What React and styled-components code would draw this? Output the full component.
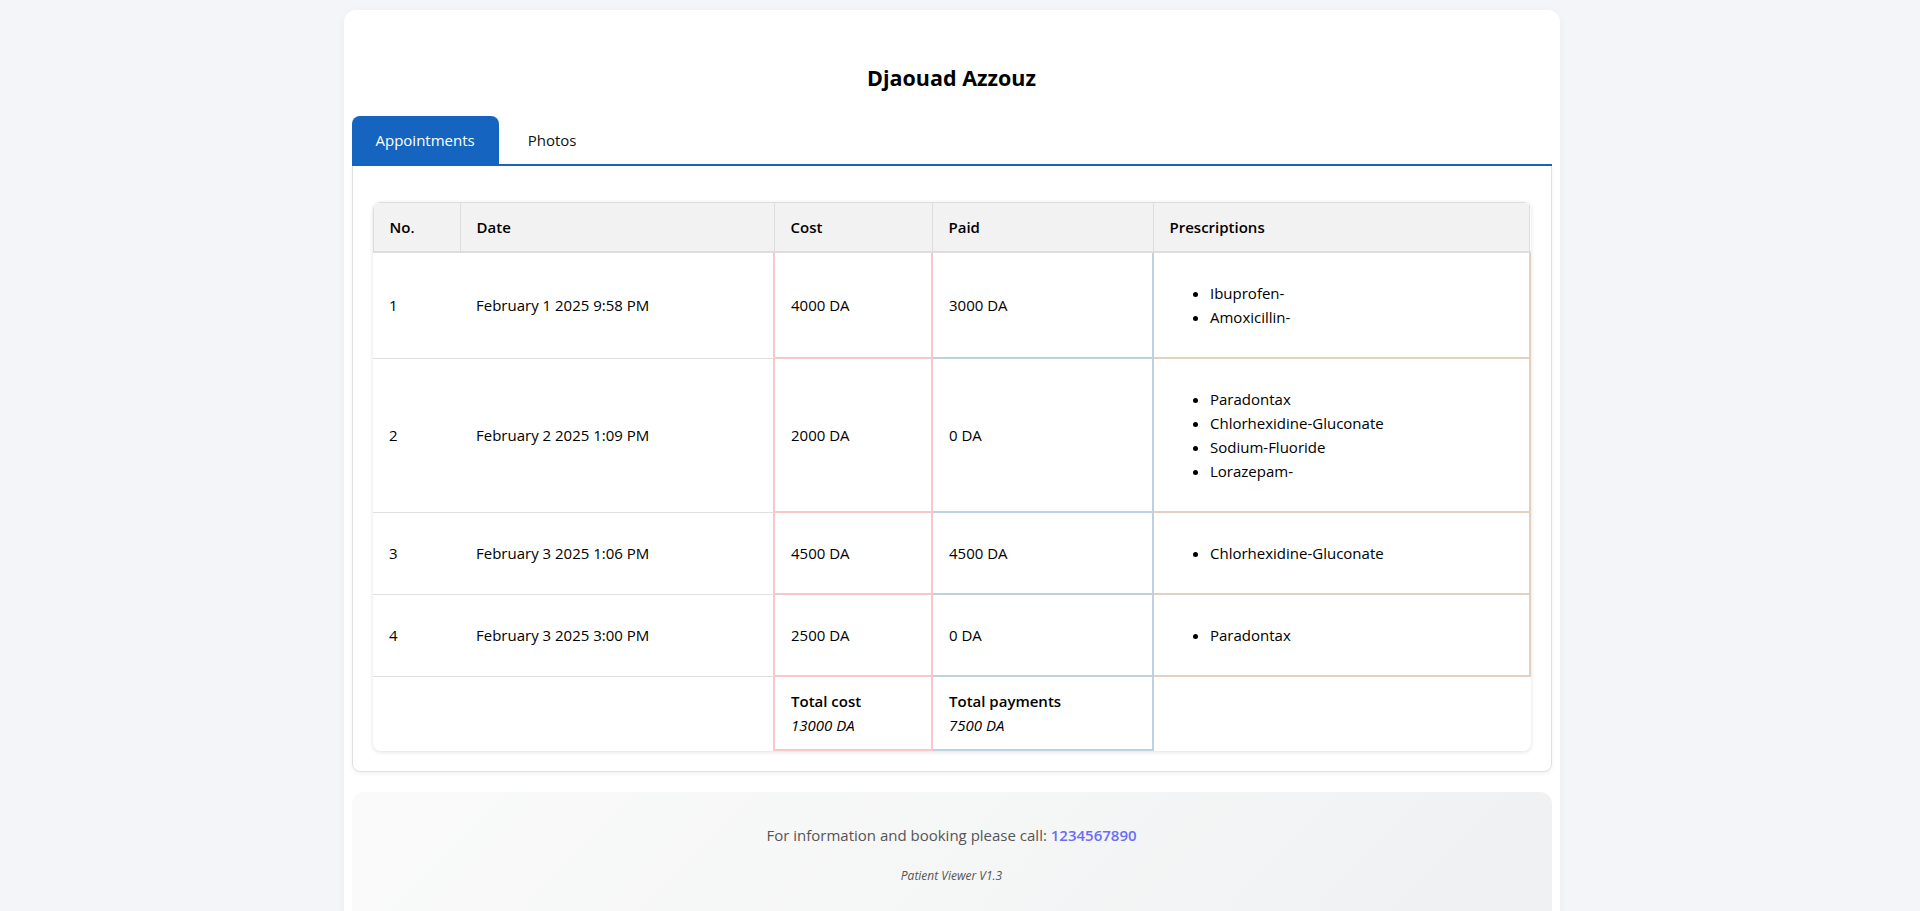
import React, { useState } from 'react';
import styled, { createGlobalStyle } from 'styled-components';

const GlobalStyle = createGlobalStyle`
  html, body {
    margin: 0;
    padding: 0;
  }
  body {
    background: #f4f5f9;
    font-family: "Open Sans", "Noto Sans", sans-serif;
    font-size: 15px;
    line-height: 24px;
    color: #000;
  }
  ::-webkit-scrollbar {
    width: 17px;
  }
  ::-webkit-scrollbar-track {
    background: #434343;
  }
  ::-webkit-scrollbar-thumb {
    background: #686868;
  }
`;

// the reference was taken with a 17px scrollbar eating into the viewport
const Page = styled.div`
  padding: 10px 17px 30px 0;
`;

const Card = styled.div`
  box-sizing: border-box;
  width: 1216px;
  margin: 0 auto;
  padding: 8px 8px 30px;
  background: #fff;
  border-radius: 12px;
  box-shadow: 0 2px 10px rgba(0, 0, 0, 0.04);
`;

const Title = styled.h2`
  margin: 45px 0 23px;
  text-align: center;
  font-size: 21.5px;
  line-height: 30px;
  font-weight: 700;
  color: #000;
`;

const TabList = styled.div`
  display: flex;
  gap: 5px;
  border-bottom: 2px solid #1565c0;
`;

const Tab = styled.button`
  height: 48px;
  padding: 0 24px;
  border: none;
  border-radius: 8px 8px 0 0;
  font-family: inherit;
  font-size: 15px;
  cursor: pointer;
  background: ${p => (p.$active ? '#1565c0' : 'transparent')};
  color: ${p => (p.$active ? '#fff' : '#111')};
`;

const Panel = styled.div`
  padding: 20px;
  border: 1px solid #e0e0e0;
  border-top: none;
  border-radius: 0 0 8px 8px;
  box-shadow: 0 2px 4px rgba(0, 0, 0, 0.05);
`;

const TableWrap = styled.div`
  margin-top: 16px;
  border-radius: 8px;
  overflow: hidden;
  box-shadow: 0 1px 4px rgba(0, 0, 0, 0.13);
`;

const Table = styled.table`
  width: 100%;
  border-collapse: collapse;
  table-layout: fixed;
`;

const Th = styled.th`
  padding: 12px 16px;
  text-align: left;
  font-weight: 600;
  background: #f2f2f2;
  border: 1px solid #dddddd;
  border-bottom: 2px solid #dddddd;
`;

const colors = {
  cost: '#f8c8c8',
  paid: '#bdd1e3',
  rx: '#e3d1bf',
};

const Td = styled.td`
  padding: 12px 16px;
  vertical-align: middle;
  border-bottom: ${p => (p.$tone ? `2px solid ${colors[p.$tone]}` : '1px solid #e0e0e0')};
  border-left: ${p => (p.$tone ? `2px solid ${colors[p.$tone]}` : 'none')};
  border-right: ${p => (p.$tone ? `2px solid ${colors[p.$tone]}` : 'none')};
`;

const FootTd = styled.td`
  padding: 12px 16px;
  vertical-align: middle;
  border-bottom: ${p => (p.$tone ? `2px solid ${colors[p.$tone]}` : 'none')};
  border-left: ${p => (p.$tone ? `2px solid ${colors[p.$tone]}` : 'none')};
  border-right: ${p => (p.$tone ? `2px solid ${colors[p.$tone]}` : 'none')};
`;

const RxList = styled.ul`
  margin: 16px 0;
  padding-left: 40px;
`;

const TotalLabel = styled.div`
  font-weight: 600;
`;

const TotalValue = styled.div`
  font-style: italic;
`;

const Footer = styled.div`
  margin-top: 20px;
  padding: 31px 20px 40px;
  border-radius: 12px;
  text-align: center;
  color: #555;
  background: linear-gradient(135deg, #fafafa 0%, #f5f6f6 50%, #eff0f2 100%);
`;

const CallLine = styled.p`
  margin: 0;
  font-size: 15px;
  line-height: 24px;
`;

const Phone = styled.span`
  color: #6b6ef5;
  font-weight: 600;
`;

const Version = styled.p`
  margin: 19px 0 0;
  font-size: 12px;
  line-height: 19px;
  font-style: italic;
`;

const appointments = [
  { no: 1, date: 'February 1 2025 9:58 PM', cost: 4000, paid: 3000, rx: ['Ibuprofen-', 'Amoxicillin-'] },
  { no: 2, date: 'February 2 2025 1:09 PM', cost: 2000, paid: 0, rx: ['Paradontax', 'Chlorhexidine-Gluconate', 'Sodium-Fluoride', 'Lorazepam-'] },
  { no: 3, date: 'February 3 2025 1:06 PM', cost: 4500, paid: 4500, rx: ['Chlorhexidine-Gluconate'] },
  { no: 4, date: 'February 3 2025 3:00 PM', cost: 2500, paid: 0, rx: ['Paradontax'] },
];

const App = () => {
  const [tab, setTab] = useState('appointments');
  const totalCost = appointments.reduce((s, a) => s + a.cost, 0);
  const totalPaid = appointments.reduce((s, a) => s + a.paid, 0);

  return (
    <Page>
      <GlobalStyle />
      <Card>
        <Title>Djaouad Azzouz</Title>
        <TabList>
          <Tab $active={tab === 'appointments'} onClick={() => setTab('appointments')}>Appointments</Tab>
          <Tab $active={tab === 'photos'} onClick={() => setTab('photos')}>Photos</Tab>
        </TabList>
        <Panel>
          <TableWrap>
            <Table>
              <colgroup>
                <col style={{ width: 87 }} />
                <col style={{ width: 314 }} />
                <col style={{ width: 158 }} />
                <col style={{ width: 221 }} />
                <col />
              </colgroup>
              <thead>
                <tr>
                  <Th>No.</Th>
                  <Th>Date</Th>
                  <Th>Cost</Th>
                  <Th>Paid</Th>
                  <Th>Prescriptions</Th>
                </tr>
              </thead>
              <tbody>
                {appointments.map(a => (
                  <tr key={a.no}>
                    <Td>{a.no}</Td>
                    <Td>{a.date}</Td>
                    <Td $tone="cost">{a.cost} DA</Td>
                    <Td $tone="paid">{a.paid} DA</Td>
                    <Td $tone="rx">
                      <RxList>
                        {a.rx.map((r, i) => <li key={i}>{r}</li>)}
                      </RxList>
                    </Td>
                  </tr>
                ))}
                <tr>
                  <FootTd />
                  <FootTd />
                  <FootTd $tone="cost">
                    <TotalLabel>Total cost</TotalLabel>
                    <TotalValue>{totalCost} DA</TotalValue>
                  </FootTd>
                  <FootTd $tone="paid">
                    <TotalLabel>Total payments</TotalLabel>
                    <TotalValue>{totalPaid} DA</TotalValue>
                  </FootTd>
                  <FootTd />
                </tr>
              </tbody>
            </Table>
          </TableWrap>
        </Panel>
        <Footer>
          <CallLine>For information and booking please call: <Phone>1234567890</Phone></CallLine>
          <Version>Patient Viewer V1.3</Version>
        </Footer>
      </Card>
    </Page>
  );
};

export default App;
